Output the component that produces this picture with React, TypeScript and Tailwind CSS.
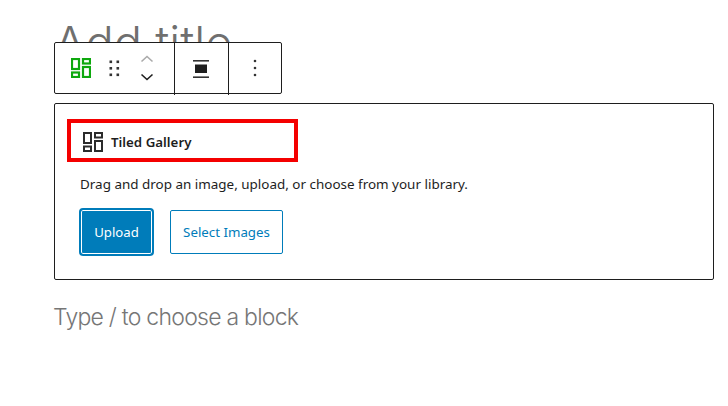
export default function App() {
  return (
    <div className="relative w-[728px] h-[406px] bg-white overflow-hidden font-['Noto_Sans',sans-serif] pt-[18px] pl-[54px]">
      <h1 className="h-[85px] text-[47px] leading-[50px] font-light text-[#6f6f6f] font-['Inter',sans-serif] tracking-[0px]">Add title</h1>

      <div className="absolute left-[54px] top-[42px] w-[228px] h-[52px] bg-white border border-[#1e1e1e] rounded-[2px] flex">
        <div className="w-[119px] flex items-center">
          <svg className="ml-[16px]" width="20" height="20" viewBox="0 0 20 20" fill="none" stroke="#0ea80e" strokeWidth="2.2">
            <rect x="1" y="1" width="7" height="10" />
            <rect x="12" y="1" width="7" height="4.5" />
            <rect x="1" y="14.5" width="7" height="4.5" />
            <rect x="12" y="9" width="7" height="10" />
          </svg>
          <svg className="ml-[18px]" width="11" height="17" viewBox="0 0 11 17" fill="#333">
            <rect x="0.5" y="0.5" width="2.6" height="2.6" />
            <rect x="7.5" y="0.5" width="2.6" height="2.6" />
            <rect x="0.5" y="7" width="2.6" height="2.6" />
            <rect x="7.5" y="7" width="2.6" height="2.6" />
            <rect x="0.5" y="13.5" width="2.6" height="2.6" />
            <rect x="7.5" y="13.5" width="2.6" height="2.6" />
          </svg>
          <svg className="ml-[20px]" width="14" height="26" viewBox="0 0 14 26" fill="none" strokeWidth="1.6">
            <path d="M1.5 6.5 L7 1.5 L12.5 6.5" stroke="#aaaaaa" />
            <path d="M1.5 19.5 L7 24.5 L12.5 19.5" stroke="#1e1e1e" />
          </svg>
        </div>
        <div className="w-[55px] h-[52px] pr-[1px] border-l border-r border-[#1e1e1e] flex items-center justify-center shrink-0">
          <svg width="16" height="18" viewBox="0 0 16 18" fill="none">
            <rect x="0" y="0" width="16" height="1.6" fill="#333" />
            <rect x="2" y="4.5" width="12" height="8.5" fill="#1e1e1e" />
            <rect x="0" y="16.4" width="16" height="1.6" fill="#333" />
          </svg>
        </div>
        <div className="flex-1 flex items-center justify-center">
          <svg width="4" height="18" viewBox="0 0 4 18" fill="#333">
            <circle cx="2" cy="2" r="1.3" />
            <circle cx="2" cy="9" r="1.3" />
            <circle cx="2" cy="16" r="1.3" />
          </svg>
        </div>
      </div>

      <div className="w-[660px] h-[177px] border border-[#1e1e1e] rounded-[2px] pt-[15px] pl-[12px]">
        <div className="w-[231px] h-[43px] border-[4px] border-[#f40000] flex items-center pl-[12px] gap-[8px] pt-[2px]">
          <svg width="20" height="20" viewBox="0 0 20 20" fill="none" stroke="#2b2b2b" strokeWidth="2">
            <rect x="1" y="1" width="7" height="10" />
            <rect x="12" y="1" width="7" height="4.5" />
            <rect x="1" y="14.5" width="7" height="4.5" />
            <rect x="12" y="9" width="7" height="10" />
          </svg>
          <span className="mt-[2px] text-[13.3px] font-semibold text-[#1e1e1e] whitespace-nowrap">Tiled Gallery</span>
        </div>
        <p className="mt-[12px] ml-[13px] text-[13.45px] leading-[20px] text-[#1e1e1e] whitespace-nowrap">Drag and drop an image, upload, or choose from your library.</p>
        <div className="mt-[14px] ml-[12px] flex items-center gap-[16px]">
          <button className="w-[75px] h-[48px] pt-[1px] rounded-[4px] bg-[#007cba] border-2 border-[#007cba] text-white text-[13.2px] shadow-[inset_0_0_0_1px_#fff]">Upload</button>
          <button className="w-[113px] h-[44px] pt-[1px] rounded-[2px] bg-white border border-[#007cba] text-[#007cba] text-[13.3px]">Select Images</button>
        </div>
      </div>

      <p className="mt-[21px] -ml-px text-[23px] leading-[32px] font-light text-[#767676] font-['Inter',sans-serif] tracking-[-0.75px] whitespace-nowrap">Type / to choose a block</p>
    </div>
  );
}
